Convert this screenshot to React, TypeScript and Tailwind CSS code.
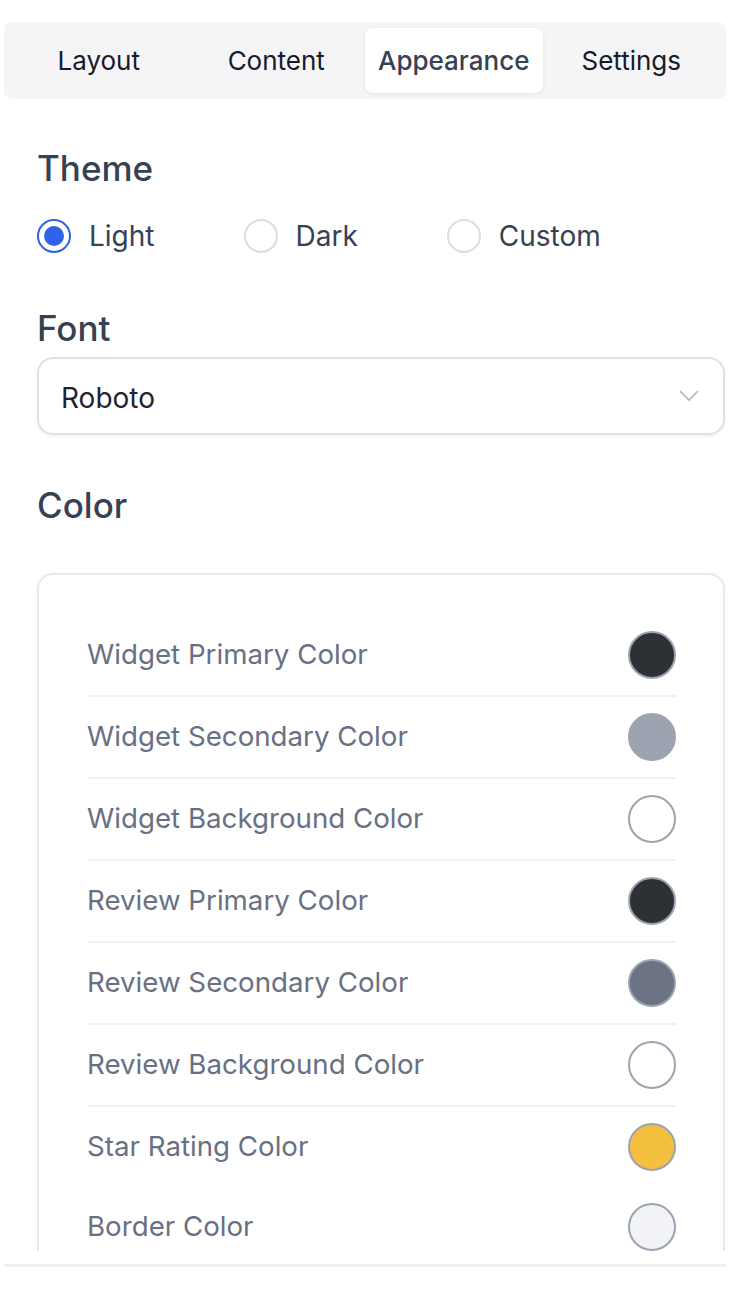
import { useState } from 'react';

const tabs = ['Layout', 'Content', 'Appearance', 'Settings'];

const colors = [
  { label: 'Widget Primary Color', fill: 'bg-[#2d3136]' },
  { label: 'Widget Secondary Color', fill: 'bg-[#9ba2b0]' },
  { label: 'Widget Background Color', fill: 'bg-white' },
  { label: 'Review Primary Color', fill: 'bg-[#2d3136]' },
  { label: 'Review Secondary Color', fill: 'bg-[#6b7385]' },
  { label: 'Review Background Color', fill: 'bg-white' },
  { label: 'Star Rating Color', fill: 'bg-[#f4bf3f]' },
  { label: 'Border Color', fill: 'bg-[#f1f3f7]' },
];

const themes = ['Light', 'Dark', 'Custom'];

const App = () => {
  const [tab, setTab] = useState('Appearance');
  const [theme, setTheme] = useState('Light');

  return (
    <div className="w-[744px] h-[1302px] overflow-hidden bg-white font-['Inter','Noto_Sans',sans-serif]">
      <div className="ml-[4px] w-[722px] pt-[22px]">
        {/* TABS */}
        <div className="grid grid-cols-4 h-[77px] p-[6px] rounded-[8px] bg-[#f5f5f7]">
          {tabs.map((t) => (
            <button
              key={t}
              onClick={() => setTab(t)}
              className={
                t === tab
                  ? 'rounded-[8px] bg-white shadow-[0_1px_4px_rgba(0,0,0,0.08)] text-[26px] font-medium text-[#364152]'
                  : 'rounded-[8px] text-[26px] text-[#161b2a]'
              }
            >
              {t}
            </button>
          ))}
        </div>

        {/* CONTENT */}
        <div className="h-[1152px] overflow-hidden pl-[33px] pr-[1px]">
          <h2 className="mt-[49px] text-[35px] leading-[40px] font-medium text-[#364152]">Theme</h2>
          <div className="mt-[28px] flex items-center gap-[89px] h-[40px]">
            {themes.map((t) => (
              <label key={t} className="flex items-center gap-[18px] cursor-pointer" onClick={() => setTheme(t)}>
                {t === theme ? (
                  <span className="w-[34px] h-[34px] rounded-full border-2 border-[#2f62e8] flex items-center justify-center">
                    <span className="w-[20px] h-[20px] rounded-full bg-[#2f62e8]" />
                  </span>
                ) : (
                  <span className="w-[34px] h-[34px] rounded-full border-2 border-[#dcdde2]" />
                )}
                <span className="text-[28px] text-[#364152]">{t}</span>
              </label>
            ))}
          </div>

          <h2 className="mt-[52px] text-[35px] leading-[40px] font-medium text-[#364152]">Font</h2>
          <div className="mt-[9px] h-[78px] rounded-[16px] border-2 border-[#dfe0e6] shadow-[0_2px_3px_rgba(0,0,0,0.05)] flex items-center justify-between pl-[22px] pr-[24px]">
            <span className="mt-[3px] text-[28px] text-[#1f2430]">Roboto</span>
            <svg width="20" height="12" viewBox="0 0 20 12" fill="none" stroke="#b4b5bd" strokeWidth="1.6">
              <path d="M1 1l9 9 9-9" />
            </svg>
          </div>

          <h2 className="mt-[50px] text-[35px] leading-[40px] font-medium text-[#364152]">Color</h2>
          <div className="mt-[48px] rounded-[16px] border-2 border-[#e8e8ee] shadow-[0_1px_4px_rgba(0,0,0,0.05)] pl-[48px] pr-[47px] pt-[40px]">
            {colors.map((c, i) => (
              <div
                key={c.label}
                className={
                  i >= colors.length - 2
                    ? 'h-[80px] flex items-center justify-between'
                    : 'h-[82px] flex items-center justify-between border-b-2 border-[#f1f1f5]'
                }
              >
                <span className="text-[27.7px] text-[#687084]">{c.label}</span>
                <span className={`w-[48px] h-[48px] rounded-full border-2 border-[#9ca3af] ${c.fill}`} />
              </div>
            ))}
          </div>
        </div>

        {/* FOOTER */}
        <div className="mt-[13px] h-[3px] bg-[#f1f1f5]" />
      </div>
    </div>
  );
};

export default App;
